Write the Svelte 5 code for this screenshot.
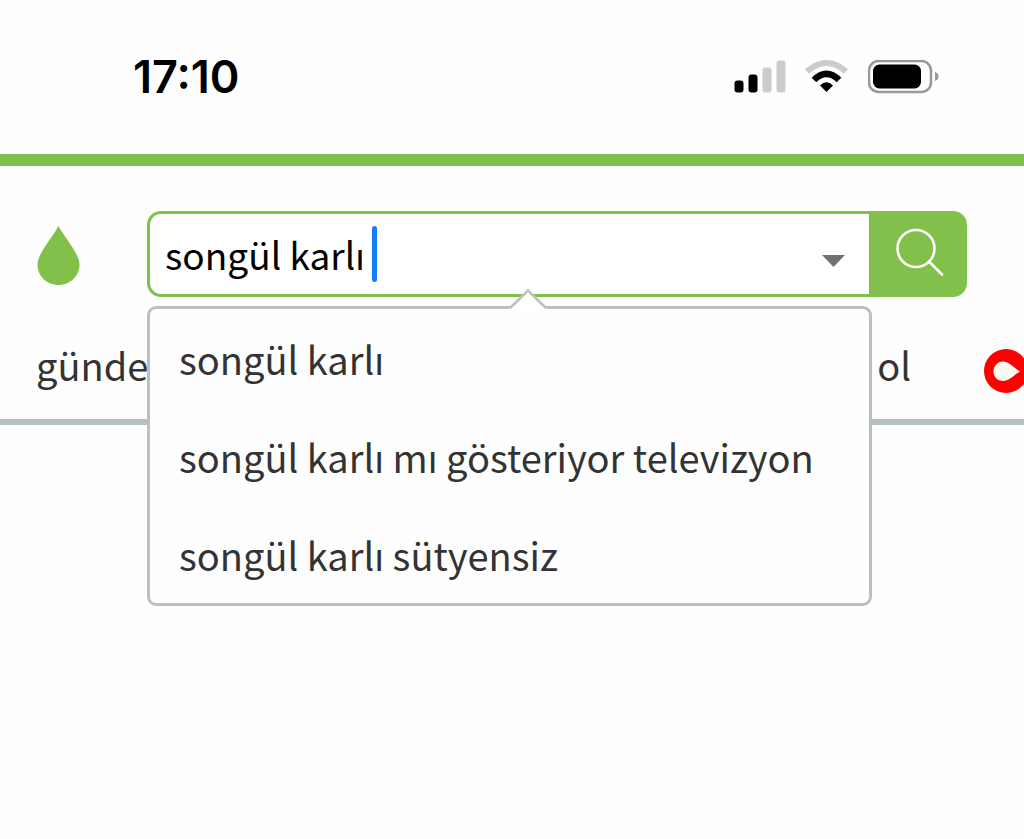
<script>
  let query = $state('songül karlı');
  const suggestions = [
    'songül karlı',
    'songül karlı mı gösteriyor televizyon',
    'songül karlı sütyensiz'
  ];
</script>

<div class="page">
  <div class="status">
    <time>17:10</time>
    <div class="indicators">
      <svg width="52" height="34" viewBox="0 0 52 34" aria-hidden="true">
        <rect x="0.500" y="20.500" width="9" height="12" rx="3" fill="#000" />
        <rect x="14.500" y="14.500" width="9" height="18" rx="3" fill="#000" />
        <rect x="28.500" y="7.500" width="9" height="25" rx="3" fill="#ccc" />
        <rect x="42.500" y="0.500" width="9" height="32" rx="3" fill="#ccc" />
      </svg>
      <svg width="44" height="34" viewBox="0 0 44 34" fill="none" aria-hidden="true">
        <path d="M2 11.500Q21.500 -5.500 41 11.500" stroke="#ccc" stroke-width="6" />
        <path d="M9 20Q21.500 7.500 34 20" stroke="#000" stroke-width="6.500" />
        <path d="M15 25.500Q21.500 19 28 25.500L21.500 32Z" fill="#000" />
      </svg>
      <svg width="72" height="34" viewBox="0 0 72 34" aria-hidden="true">
        <rect x="1" y="1" width="62" height="31" rx="9.500" fill="none" stroke="#999" stroke-width="2.500" />
        <rect x="5" y="4.500" width="48" height="24" rx="6.500" fill="#000" />
        <path d="M67 12Q70.500 13 70.500 16.500T67 21Z" fill="#999" />
      </svg>
    </div>
  </div>

  <header>
    <div class="top">
      <a class="logo" href="#home" aria-label="home">
        <svg width="44" height="60" viewBox="0 0 44 60" aria-hidden="true">
          <path d="M22.500 0C29 12 43.500 28 43.500 38.500C43.500 50 34.500 59 22.500 59S1.500 50 1.500 38.500C1.500 28 16 12 22.500 0Z" fill="#81c14b" />
        </svg>
      </a>
      <form class="search" role="search" onsubmit={(e) => e.preventDefault()}>
        <div class="field">
          <input type="text" aria-label="search" bind:value={query} autocomplete="off" />
          <span class="caret"></span>
          <button class="toggle" type="button" aria-label="options">
            <svg width="24" height="12" viewBox="0 0 24 12" aria-hidden="true">
              <path d="M1 0H24L12.500 12Z" fill="#707070" />
            </svg>
          </button>
        </div>
        <button class="go" type="submit" aria-label="search">
          <svg width="50" height="50" viewBox="0 0 50 50" fill="none" stroke="#fff" stroke-width="2.600" stroke-linecap="round" aria-hidden="true">
            <circle cx="21" cy="20.500" r="18.500" />
            <path d="M34 33.500L47 46.500" />
          </svg>
        </button>
        <div class="popup">
          <svg class="tip" width="40" height="21" viewBox="0 0 40 21" aria-hidden="true">
            <path d="M1 21L2 19L20 1.500L38 19L39 21Z" fill="#fff" />
            <path d="M2 19L20 1.500L38 19" fill="none" stroke="#b9c0c4" stroke-width="2.500" />
          </svg>
          <ul>
            {#each suggestions as item}
              <li><a href="#suggestion">{item}</a></li>
            {/each}
          </ul>
        </div>
      </form>
    </div>
    <nav>
      <a href="#first">günde</a>
      <a class="far" href="#second">ol</a>
      <a class="badge" href="#third" aria-label="video">
        <svg width="44" height="44" viewBox="0 0 44 44" aria-hidden="true">
          <circle cx="22" cy="22" r="22" fill="#f00" />
          <path d="M36 22.500C30 26 25 32 19 32C13.500 32 9.500 28 9.500 22.500S13.500 12.500 19 12.500C25 12.500 30 19 36 22.500Z" fill="#f9f9f2" />
        </svg>
      </a>
    </nav>
  </header>
</div>

<style>
  :global(body) {
    margin: 0;
    background: #fefefe;
    overflow-x: hidden;
  }
  .page {
    overflow-x: hidden;
    min-height: 100vh;
    font-family: "Noto Sans CJK SC", "Noto Sans", sans-serif;
    color: #333;
  }
  svg {
    display: block;
    flex: none;
  }
  a {
    color: inherit;
    text-decoration: none;
  }
  button {
    border: 0;
    padding: 0;
    background: none;
  }
  .status {
    display: flex;
    align-items: center;
    justify-content: space-between;
    height: 154px;
    padding: 0 84px 0 133px;
    box-sizing: border-box;
  }
  time {
    font: 600 45px/50px Inter, sans-serif;
    color: #000;
  }
  .indicators {
    display: flex;
    gap: 19px;
  }
  header {
    border-top: 12px solid #81c14b;
    border-bottom: 6px solid #b9c0c4;
  }
  .top {
    display: flex;
    align-items: center;
    padding: 45px 57px 0 36px;
  }
  .logo {
    margin: 4px 67px 0 0;
  }
  .search {
    position: relative;
    flex: 1;
    display: flex;
    height: 86px;
  }
  .field {
    flex: 1;
    display: flex;
    align-items: center;
    border: 3px solid #81c14b;
    border-right: 0;
    border-radius: 14px 0 0 14px;
    padding: 0 24px 0 15px;
    background: #fff;
  }
  input {
    field-sizing: content;
    border: 0;
    outline: 0;
    padding: 0;
    background: none;
    font: inherit;
    font-size: 37px;
    line-height: 54px;
    color: #000;
  }
  .caret {
    width: 5px;
    height: 56px;
    margin-left: 7px;
    border-radius: 3px;
    background: #147efb;
  }
  .toggle {
    margin: 14px 0 0 auto;
  }
  .go {
    display: flex;
    justify-content: center;
    width: 98px;
    padding: 17px 0 0 4px;
    border-radius: 0 14px 14px 0;
    background: #81c14b;
  }
  .popup {
    position: absolute;
    z-index: 1;
    top: 95px;
    left: 0;
    right: 95px;
    border: 3px solid #b9c0c4;
    border-radius: 9px;
    background: #fefefe;
  }
  .tip {
    position: absolute;
    top: -20px;
    right: 321px;
  }
  ul {
    list-style: none;
    margin: 0;
    padding: 0;
  }
  li {
    padding: 23px 29px 21px;
    font-size: 38px;
    line-height: 54px;
    white-space: nowrap;
  }
  nav {
    display: flex;
    align-items: center;
    height: 108px;
    padding: 14px 0 0 36px;
    font-size: 38px;
    line-height: 54px;
  }
  .far {
    margin-left: auto;
  }
  .badge {
    margin: 12px -4px 0 73px;
  }
</style>
